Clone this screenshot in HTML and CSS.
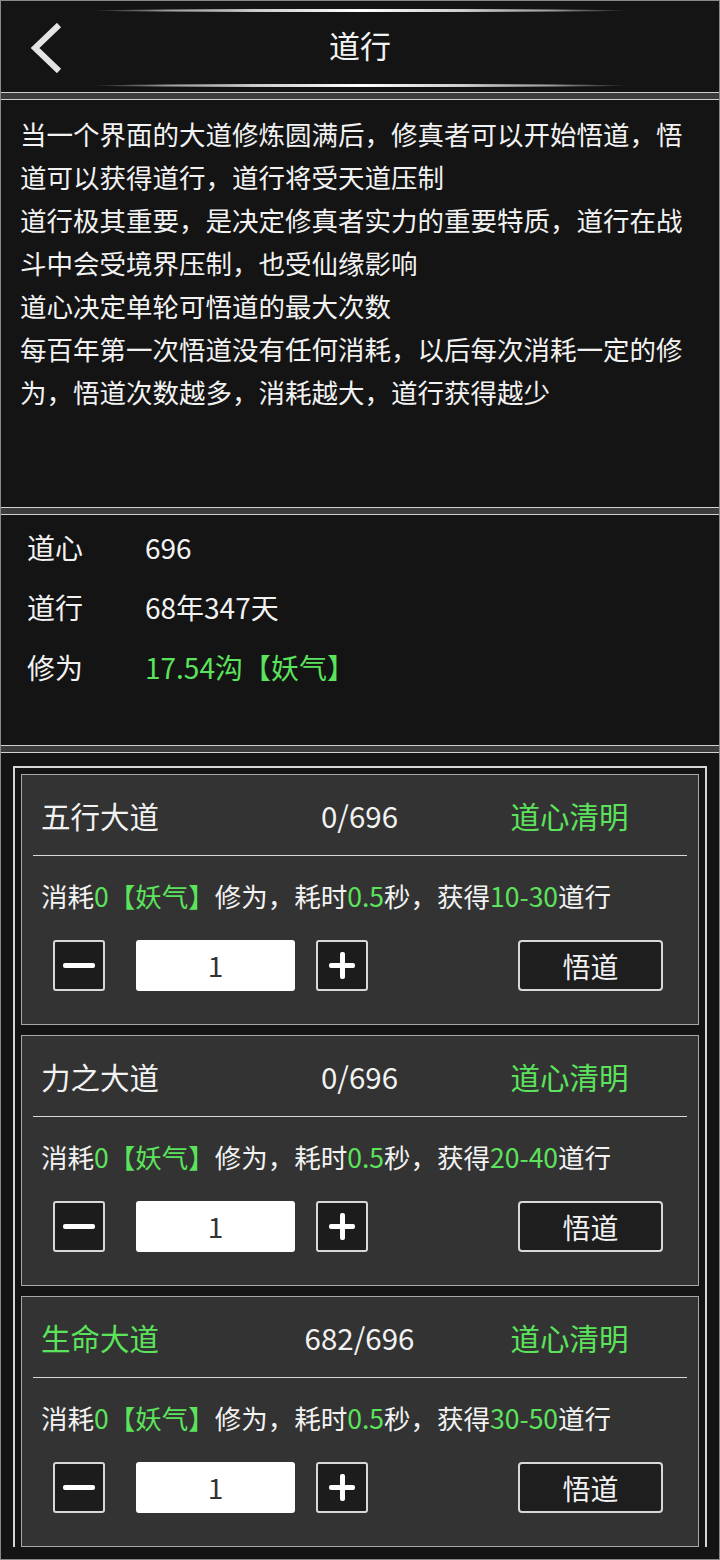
FILE: index.html
```html
<!DOCTYPE html>
<html>

<head>
    <title>道行</title>
    <meta charset="utf-8">
    <meta name="viewport" content="width=device-width, initial-scale=1.0">
    <link rel="stylesheet" href="styles.css">
</head>

<body>
    <div class="screen">
        <div class="topbar">
            <div class="glow"></div>
            <div class="title-row">
                <div class="back">
                    <svg width="34" height="50" viewBox="0 0 34 50">
                        <path d="M29 2 L5 25 L29 48" fill="none" stroke="#e4e4e4" stroke-width="6" />
                    </svg>
                </div>
                <h1>道行</h1>
                <div></div>
            </div>
            <div class="glow"></div>
        </div>

        <div class="sep"></div>

        <div class="intro">
            <p>当一个界面的大道修炼圆满后，修真者可以开始悟道，悟道可以获得道行，道行将受天道压制</p>
            <p>道行极其重要，是决定修真者实力的重要特质，道行在战斗中会受境界压制，也受仙缘影响</p>
            <p>道心决定单轮可悟道的最大次数</p>
            <p>每百年第一次悟道没有任何消耗，以后每次消耗一定的修为，悟道次数越多，消耗越大，道行获得越少</p>
        </div>

        <div class="sep"></div>

        <div class="stats">
            <div class="stat-row"><span class="stat-label">道心</span><span>696</span></div>
            <div class="stat-row"><span class="stat-label">道行</span><span>68年347天</span></div>
            <div class="stat-row"><span class="stat-label">修为</span><span class="green">17.54沟【妖气】</span></div>
        </div>

        <div class="sep"></div>

        <div class="lower">
            <div class="list-box">
                <div class="card">
                    <div class="card-head">
                        <span>五行大道</span>
                        <span class="count">0/696</span>
                        <span class="status green">道心清明</span>
                    </div>
                    <div class="card-desc">消耗<span class="green">0【妖气】</span>修为，耗时<span class="green">0.5</span>秒，获得<span class="green">10-30</span>道行</div>
                    <div class="controls">
                        <button class="step minus"><span></span></button>
                        <div class="amount">1</div>
                        <button class="step plus"><span></span></button>
                        <button class="go">悟道</button>
                    </div>
                </div>

                <div class="card">
                    <div class="card-head">
                        <span>力之大道</span>
                        <span class="count">0/696</span>
                        <span class="status green">道心清明</span>
                    </div>
                    <div class="card-desc">消耗<span class="green">0【妖气】</span>修为，耗时<span class="green">0.5</span>秒，获得<span class="green">20-40</span>道行</div>
                    <div class="controls">
                        <button class="step minus"><span></span></button>
                        <div class="amount">1</div>
                        <button class="step plus"><span></span></button>
                        <button class="go">悟道</button>
                    </div>
                </div>

                <div class="card">
                    <div class="card-head">
                        <span class="green">生命大道</span>
                        <span class="count">682/696</span>
                        <span class="status green">道心清明</span>
                    </div>
                    <div class="card-desc">消耗<span class="green">0【妖气】</span>修为，耗时<span class="green">0.5</span>秒，获得<span class="green">30-50</span>道行</div>
                    <div class="controls">
                        <button class="step minus"><span></span></button>
                        <div class="amount">1</div>
                        <button class="step plus"><span></span></button>
                        <button class="go">悟道</button>
                    </div>
                </div>
            </div>
        </div>
    </div>
</body>

</html>
```

FILE: styles.css
```css
body {
    margin: 0;
    background-color: #141414;
    font-family: "Noto Sans CJK SC", "Noto Sans", sans-serif;
    color: #f2f2f2;
    overflow: hidden;
}

.screen {
    width: 720px;
    height: 1560px;
    box-sizing: border-box;
    border: 1px solid #8a8a8a;
    background-color: #141414;
    display: flex;
    flex-direction: column;
    overflow: hidden;
}

.green {
    color: #5ce35c;
}

/* header */
.topbar {
    height: 91px;
    box-sizing: border-box;
    padding: 8px 0 5px;
    display: flex;
    flex-direction: column;
    align-items: center;
    justify-content: space-between;
}

.glow {
    width: 540px;
    height: 3px;
    border-radius: 50%;
    background: linear-gradient(90deg, rgba(255, 255, 255, 0), rgba(220, 220, 220, 0.7) 15%, #ffffff 50%, rgba(220, 220, 220, 0.7) 85%, rgba(255, 255, 255, 0));
}

.title-row {
    width: 100%;
    display: grid;
    grid-template-columns: 1fr auto 1fr;
    align-items: center;
}

.back {
    padding-left: 29px;
    display: flex;
    align-items: center;
}

.title-row h1 {
    margin: 0 0 6px;
    font-size: 31px;
    font-weight: normal;
    line-height: 40px;
}

.sep {
    flex: 0 0 auto;
    height: 6px;
    border-top: 1px solid #d0d0d0;
    border-bottom: 1px solid #d0d0d0;
    background-color: #3c3c3c;
}

/* description */
.intro {
    height: 407px;
    box-sizing: border-box;
    padding: 12px 18px 0 19px;
    font-size: 26.5px;
    line-height: 43px;
}

.intro p {
    margin: 0;
}

/* stats */
.stats {
    height: 230px;
    box-sizing: border-box;
    padding: 2px 0 0 26px;
    font-size: 28px;
}

.stat-row {
    display: flex;
    height: 60px;
    align-items: center;
}

.stat-label {
    width: 118px;
}

/* list */
.lower {
    flex: 1;
    padding: 13px 12px 0;
}

.list-box {
    border: 2px solid #d6d6d6;
    border-bottom: none;
    padding: 6px 6px 0;
    display: flex;
    flex-direction: column;
    gap: 10px;
}

.card {
    border: 1px solid #a8a8a8;
    background-color: #333333;
    padding-bottom: 33px;
}

.card-head {
    margin: 0 11px;
    padding: 0 9px 0 8px;
    height: 80px;
    border-bottom: 1px solid #d8d8d8;
    display: grid;
    grid-template-columns: 1fr 160px 1fr;
    align-items: center;
    font-size: 29.5px;
}

.count {
    text-align: center;
}

.status {
    padding-left: 71px;
}

.card-desc {
    height: 80px;
    line-height: 80px;
    padding-left: 19px;
    font-size: 26.5px;
}

.controls {
    margin-top: 4px;
    height: 51px;
    padding-left: 31px;
    display: flex;
    align-items: center;
}

.step {
    width: 52px;
    height: 51px;
    box-sizing: border-box;
    border: 2px solid #d8d8d8;
    border-radius: 3px;
    background-color: #1c1c1c;
    padding: 0;
    position: relative;
    cursor: pointer;
}

.step span {
    position: absolute;
    left: 8px;
    top: 21px;
    width: 32px;
    height: 5px;
    border-radius: 2px;
    background-color: #ffffff;
}

.plus span {
    left: 11px;
    width: 26px;
}

.plus span::after {
    content: "";
    position: absolute;
    left: 11px;
    top: -11px;
    width: 5px;
    height: 27px;
    border-radius: 2px;
    background-color: #ffffff;
}

.amount {
    width: 159px;
    height: 51px;
    margin: 0 21px 0 31px;
    border-radius: 3px;
    background-color: #ffffff;
    color: #333333;
    font-size: 28px;
    line-height: 51px;
    text-align: center;
}

.go {
    margin-left: auto;
    margin-right: 35px;
    width: 145px;
    height: 51px;
    border: 2px solid #d8d8d8;
    border-radius: 4px;
    background-color: #1e1e1e;
    color: #f2f2f2;
    font-family: inherit;
    font-size: 28px;
    padding: 0;
    cursor: pointer;
}
```
